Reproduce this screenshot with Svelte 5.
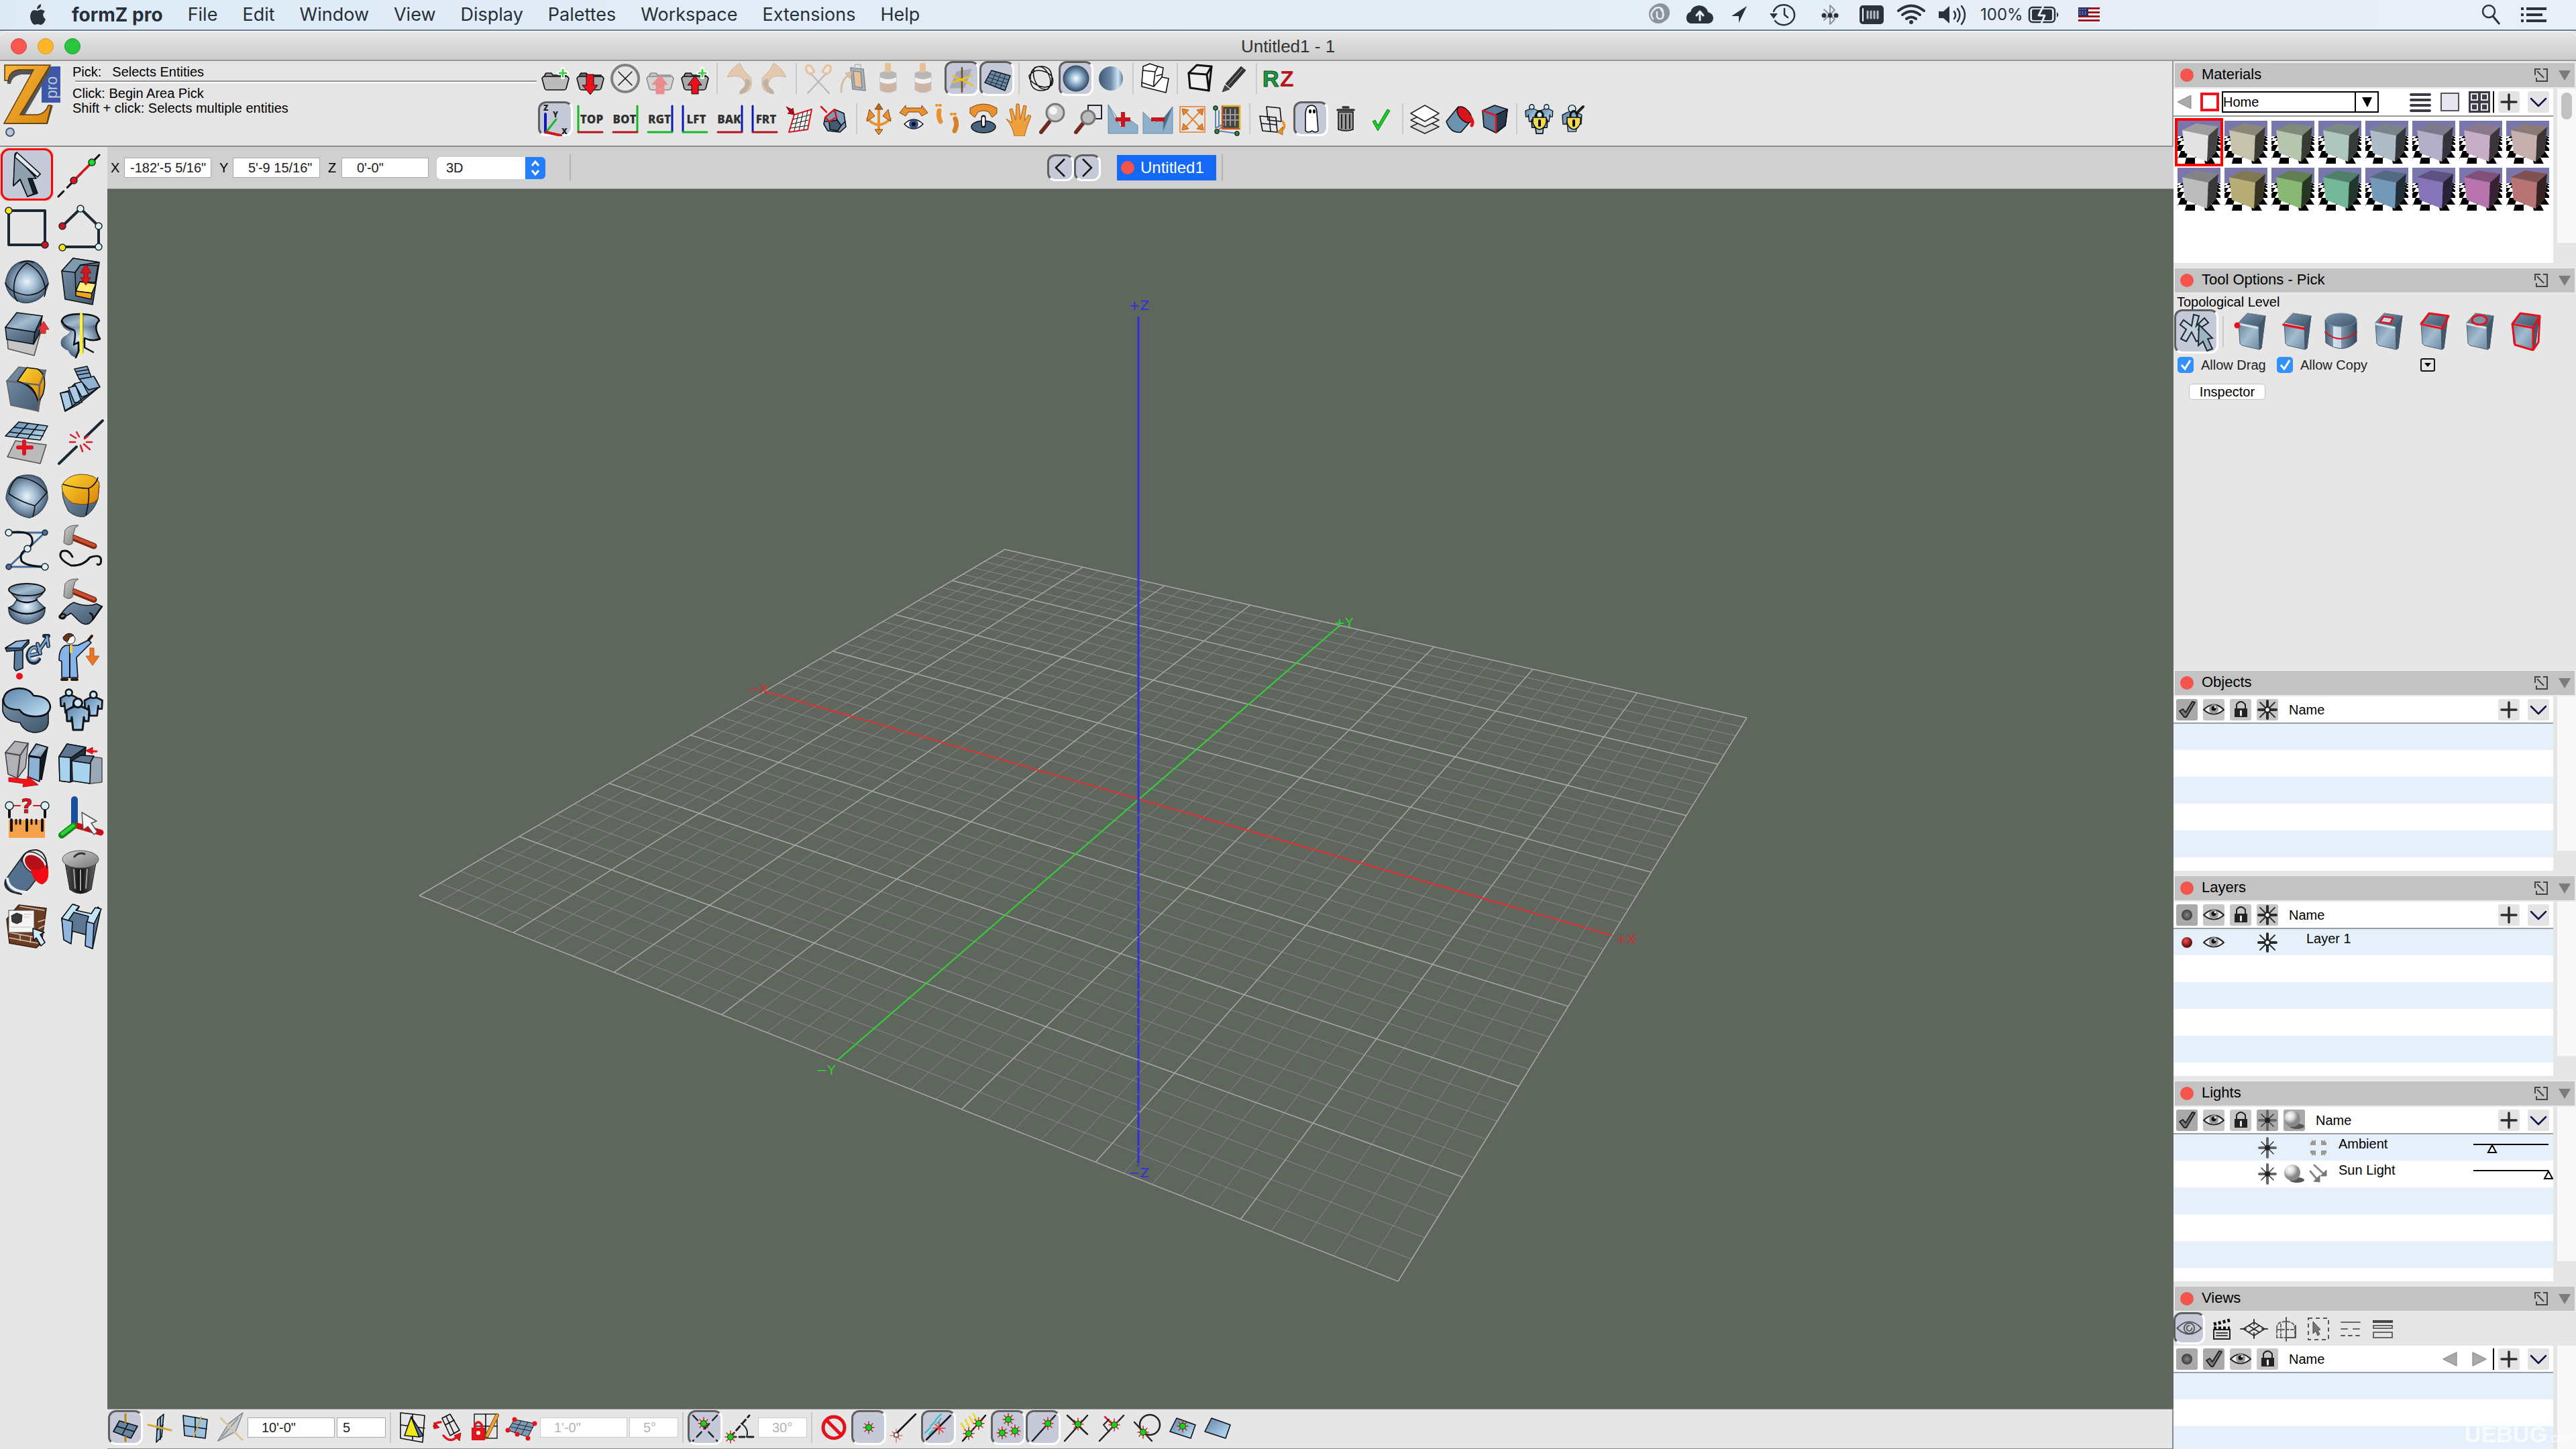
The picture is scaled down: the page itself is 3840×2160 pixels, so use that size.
<script lang="ts">
  const menus = ['File', 'Edit', 'Window', 'View', 'Display', 'Palettes', 'Workspace', 'Extensions', 'Help']

  let x = `-182'-5 5/16"`,
    y = `5'-9 15/16"`,
    z = `0'-0"`,
    space = '3D'
  let gridSize = `10'-0"`,
    gridDiv = '5',
    snapSize = `1'-0"`,
    snapAngle = '5°',
    angle = '30°'
  let allowDrag = true,
    allowCopy = true

  // --- icon helpers -------------------------------------------------------
  const dot = (cx: number, cy: number, fill: string, r = 5) =>
    `<circle cx="${cx}" cy="${cy}" r="${r}" fill="${fill}" stroke="#1c242c" stroke-width="1.5"/>`
  const poly = (pts: string, fill: string, stroke = '#0c1015', w = 1.6) =>
    `<polygon points="${pts}" fill="${fill}" stroke="${stroke}" stroke-width="${w}" stroke-linejoin="round"/>`
  const line = (d: string, stroke = '#0c1015', w = 1.6, extra = '') =>
    `<path d="${d}" fill="none" stroke="${stroke}" stroke-width="${w}" stroke-linecap="round" stroke-linejoin="round" ${extra}/>`
  const shape = (d: string, fill: string, stroke = '#0c1015', w = 1.6) =>
    `<path d="${d}" fill="${fill}" stroke="${stroke}" stroke-width="${w}" stroke-linejoin="round"/>`
  const spark = (cx: number, cy: number) =>
    line(`M${cx - 8} ${cy}h16M${cx} ${cy - 9}v18M${cx - 6} ${cy - 6}l12 12M${cx + 6} ${cy - 6}l-12 12`, '#c8232b', 1.5) +
    `<circle cx="${cx}" cy="${cy}" r="4.5" fill="#1ed00f" stroke="#0c4010"/>`
  const hammer =
    line('M28 21L60 34', '#7c2710', 9) + line('M28 20L60 33', '#c8502e', 5) +
    shape('M15 29l2-19q6-8 20-7l-5 4-3 10-1 13q-6 5-13-1z', 'url(#grey)', '#555', 1)
  const person = (dx: number, dy: number, s = 1, w = 2.5) =>
    `<g transform="translate(${dx} ${dy}) scale(${s})">` +
    shape('M0 17Q8 12 13 11h8q5 1 13 6l-1 16h-6l-1-6-2 19H10L8 27l-1 6H1z', 'url(#sky)', '#10161c', w) +
    `<circle cx="17" cy="6" r="6.5" fill="#cfe8f8" stroke="#10161c" stroke-width="${w}"/></g>`
  const folder = (lid: string, body: string) =>
    shape('M10 32V21l2-3h8l2 3h20v11z', lid) + shape('M6 26l2-3h36l2 3-4 15q-1 2-3 2H13q-2 0-3-2z', body)
  const viewLabel = (t: string, side: 'l' | 'r', c1: string, c2: string) =>
    line(side == 'l' ? 'M8 7v38' : 'M44 7v38', c1, 3) + line('M8 46h36', c2, 3) +
    `<text x="${side == 'l' ? 28 : 25}" y="33" text-anchor="middle" font-family="Open Sans, sans-serif" font-weight="800" font-size="17" fill="#333">${t}</text>`
  const cube = (extra: string) =>
    shape('M10 16L23 2 50 6 49 12 44 54 41 56 15 50 12 47z', 'url(#steel)', '#4d6072', 1) +
    shape('M10 16L23 2 50 6 40 22z', 'url(#dark)', '#6c7f90', 1) +
    line('M11 18l29 6', '#d4e2ec', 3) +
    shape('M40 22L50 6 44 54 41 56z', '#43586b', '#43586b', 1) + extra
  const lock = (cx: number, cy: number) =>
    line(`M${cx - 5} ${cy}v-5q5-9 10 0v5`, '#111', 3) +
    shape(`M${cx - 10} ${cy}h20v8q-3 9-10 10-7-1-10-10z`, '#f4d94e') + line(`M${cx} ${cy + 5}v7`, '#000', 4)
  const green = '#16b824',
    red = '#b5151d',
    blue = '#0d18b8',
    gold = '#e8912e'
  const plane = '7,32 17,12 45,22 38,42'

  // --- tool palette, 80 x 80 cells ---------------------------------------
  const tools: [string, string][] = [
    ['Pick', poly('23,8 20,57 30,48 41,73 56,68 47,44 60,40', '#16202a') + poly('22,10 20,57 30,47 41,73 50,69 42,46 54,46', '#8fa0ae') + poly('25,7 60,39 56,44 22,14', '#dfeaf0')],
    ['Line', line('M7 73L73 6', '#111', 3, 'stroke-dasharray="11 8"') + line('M30 49L57 22', '#d81620', 3.5) + dot(30, 49, '#e80f1c', 5) + dot(57, 22, '#18e01c', 5)],
    ['Rectangle', line('M13 14H67V65H13z', '#1c2830', 4) + dot(13, 14, '#f2e417') + dot(67, 65, '#d0131e')],
    ['Polyline', line('M13 37L40 11 67 37V68H13', '#1c2830', 4) + dot(13, 37, '#d0131e') + dot(40, 11, '#d8f2f8') + dot(67, 37, '#d8f2f8') + dot(67, 68, '#d8f2f8') + dot(13, 69, '#f2e417')],
    ['Dome', shape('M8 42Q12 16 32 10Q40 7 50 10Q68 18 72 42Q68 64 48 70Q38 73 30 70Q12 62 8 42z', 'url(#ball)', '#3b4e60', 1.5) + line('M8 42Q14 56 40 60Q60 60 72 43M40 12Q18 28 21 57Q22 64 26 69M40 12Q64 24 68 52Q68 58 66 62M30 12Q40 7 50 11')],
    ['Push Pull', poly('12,24 29,5 68,11 58,74 17,66', 'url(#dark)') + poly('12,24 29,5 68,11 40,15 32,26', '#7f9bb4') + poly('32,26 40,15 66,16 62,41 39,40 33,54', '#5e7388') + poly('39,40 63,43 57,57 33,54', '#ffee7a') + poly('33,54 57,57 56,66 33,61', '#f5a31a') + poly('48,14 56,27 51,27 51,34 55,34 48,45 40,34 45,34 45,27 40,27', '#d8161f', '#8c0b10', 1)],
    ['Extrude', poly('11,46 50,52 61,34 57,48 51,70 12,60', '#c5c5c5', '#555') + poly('8,28 52,35 50,53 10,46', 'url(#dark)') + poly('52,35 63,11 58,38 50,53', '#33475a') + poly('25,6 63,11 52,35 8,28', 'url(#steel)') + poly('65,19 73,31 68,31 68,37 61,37 61,31 57,31', '#e2343b', '#b02028', 1)],
    ['Revolve', shape('M11 18Q12 30 26 34L20 40Q8 44 12 56 18 62 22 62 24 70 34 73L46 44Q60 50 70 46 58 30 68 18z', 'url(#ball)', '#4d6274', 1) + `<ellipse cx="40" cy="18" rx="28" ry="10" fill="url(#steel)" stroke="none"/>` + line('M30 32Q34 34 30 54L37 50V64L33 73M12 20Q12 8 40 8 66 9 68 18 58 26 69 45 58 50 46 44V58L59 65M12 18Q16 28 30 32', '#0c1015', 2.5) + line('M41 8V68', '#fff03a', 4) + line('M44 9V66', '#8a7a10', 1)],
    ['Round', poly('10,28 28,7 68,12 57,73 16,64', 'url(#dark)', '#666') + shape('M26 28L40 8 56 10Q72 20 64 48L57 60Q54 42 42 34z', 'url(#sun)') + line('M10 28L59 34 68 12M59 34L57 73', '#666', 2.5) + line('M26 28Q50 36 56 56')],
    ['Stairs', poly('10,46 24,42 29,34 42,30 50,24 62,24 68,37 38,62 17,73', '#6f8fae') + poly('10,46 22,44 28,66 17,72', '#a9cbe8') + poly('22,38 33,35 42,60 31,60', '#a9cbe8') + poly('31,32 42,29 52,48 42,52', '#a9cbe8') + poly('38,25 60,21 69,37 52,41', '#8fb2d2') + poly('31,10 50,6 56,22 38,25', '#7fa3c4') + line('M33 14l19-3M35 19l18-3M17 73L66 38')],
    ['Mesh', poly('11,61 23,37 69,43 60,71', '#bbb', '#555') + poly('8,30 28,9 71,15 60,36', 'url(#sky)') + line('M21 17l46 5M14 24l50 6M42 11L24 32M57 13L41 34') + line('M36 38v18M27 47h20', '#e0141f', 6)],
    ['Break', line('M8 71L34 46M47 32L73 7', '#1c2830', 4) + line('M34 24l4 7M25 28l8 5M24 39h8M40 44l3 9M45 42l9 8M49 39h8M46 34l5-4', '#d8202a', 2.5)],
    ['Subdivision', shape('M9 44Q10 22 26 11 44 4 60 13 72 24 71 44 64 66 44 72 20 68 9 44z', 'url(#ball)', '#3b4e60', 1.5) + line('M13 36Q16 20 26 12Q52 12 70 34M13 36Q30 48 52 54Q60 46 70 34M52 54Q51 64 49 70')],
    ['NURBS', shape('M14 26Q10 40 22 62 34 72 46 70 60 62 66 44L68 24z', 'url(#dark)', '#222', 1) + shape('M12 24Q20 8 40 7 64 7 68 20L66 44Q56 56 28 50 12 40 12 24z', 'url(#sun)', '#704408', 1) + line('M14 22Q34 28 52 28 62 24 66 12M52 28Q54 44 48 68')],
    ['Spline', line('M67 14L13 65M13 14H67M13 65H67', '#4a6d98', 3) + line('M13 14Q46 10 48 24 50 32 41 38 28 44 32 56 38 64 67 65', '#0c1015', 3) + dot(13, 14, '#d8f2f8') + dot(67, 14, '#4a6d98', 4) + dot(41, 38, '#d8f2f8') + dot(13, 65, '#4a6d98', 4) + dot(67, 65, '#d8f2f8')],
    ['Reshape Curve', hammer + line('M28 50Q22 38 12 42 4 52 26 63 44 64 54 51 74 44 70 60q-3 3-5 1', '#111', 3)],
    ['Loft', shape('M13 18Q20 30 26 33L20 42 13 46Q12 58 22 64 40 76 58 64 68 58 67 46L56 36 54 32Q64 28 67 18z', 'url(#ball)', '#26333f', 1.5) + `<ellipse cx="40" cy="19" rx="27" ry="9" fill="url(#steel)" stroke="#111" stroke-width="2"/>` + line('M25 34Q40 42 55 34M13 46Q40 64 67 46', '#111', 2.5)],
    ['Deform Sheet', hammer + shape('M9 58Q20 42 30 38 50 46 64 40L72 44 58 64Q50 76 38 66L26 54 12 62z', 'url(#dark)') + line('M9 58q6-6 9 0-2 5-6 4-5-1-3-4M58 64q2-8-4-10M72 44l-14 20', '#111', 2.5)],
    ['Text', poly('22,28 34,28 34,56 24,60 21,56', '#5b7d9f') + poly('8,26 24,17 43,14 43,19 33,29 10,31', '#41607e') + poly('8,26 24,16 43,14 32,26', '#8fb6dc') + line('M58 32q-4-12-13-4-7 10 0 18 8 5 13-3M43 38l15-4', '#1c2c3c', 6) + line('M57 30q-4-9-11-2-6 9 0 16 7 3 11-3M45 37l12-3', '#7ea5cb', 3) + line('M56 20l4 14M70 9l2 14M58 30L70 12M66 8h6', '#1c2c3c', 6) + line('M56 20l4 14M70 9l2 14M58 30L70 12', '#7ea5cb', 3) + `<circle cx="29" cy="68" r="5" fill="#f01018"/>`],
    ['Place Symbol', poly('54,26 60,26 60,38 68,38 58,52 48,38 54,38', '#e8762a', '#c05a18', 1) + shape('M8 44Q8 26 18 22h18L52 14l4 4L38 36l-4 4 2 30H12V46z', '#86b4e8') + line('M24 42V70M24 22v20', '#111', 2) + `<circle cx="25" cy="13" r="7" fill="#fff" stroke="#111"/>` + shape('M14 10q8-10 16-3l-6 3-3 6q-7 0-7-6z', '#6b3517', '#111', 1) + line('M26 23v9', '#f0d040', 4) + line('M52 14l5-6M12 73h8M27 73h8', '#2b1a10', 4)],
    ['Boolean', shape('M4 22v18q4 16 26 17 4 12 20 15 20 0 22-14V34z', 'url(#dark)') + shape('M5 24Q6 8 28 6q16 0 22 11 24 1 25 17-2 14-22 14-18 0-24-10Q6 38 5 24z', 'url(#sky)', '#0c1015', 2.5)],
    ['Group', person(10, 8, 0.75, 3.5) + person(46, 11, 0.78, 3.5) + person(19, 22, 1, 3)],
    ['Move', poly('8,22 22,5 42,8 38,44 26,60 12,54', '#b3b0b8', '#444') + line('M8 22l22 4 12-18M30 26l-4 32', '#444', 2) + poly('43,26 54,9 71,14 62,62 44,58', '#131b22') + poly('43,28 60,30 59,65 42,58', '#8db2d4') + poly('43,26 54,9 71,14 61,29', 'url(#steel)') + poly('13,59 40,62 41,57 57,70 34,73 35,68 13,65', '#ee141c', '#c00d14', 1)],
    ['Stretch', poly('8,28 20,9 48,14 44,60 24,66 9,64', '#22303d') + poly('8,28 25,29 25,66 9,64', '#a8d2ee') + poly('8,28 20,9 48,14 27,29', '#5e7690') + poly('27,34 40,26 72,30 72,66 55,68 28,64', '#9aa9b5', '#555') + poly('27,34 55,38 54,68 28,64', '#a8d2ee') + poly('27,34 40,26 60,27 54,38', '#5e7690') + line('M64 20H52', '#ee141c', 3) + poly('48,19 58,14 58,24', '#ee141c', '#c00d14', 1)],
    ['Measure', `<rect x="13" y="42" width="54" height="27" fill="#f5a04a"/>` + line('M17 42v16M40 42v16M63 42v16', '#111', 4) + line('M24 42v6M30 42v6M47 42v6M54 42v6', '#111', 3) + line('M14 24v14M67 24v14', '#111', 4) + line('M18 21h12M50 21h12', '#d8161f', 2) + dot(14, 21, '#d8f2f8', 6) + dot(67, 21, '#d8f2f8', 6) + `<text x="40" y="32" text-anchor="middle" font-family="DejaVu Sans, sans-serif" font-weight="bold" font-size="30" fill="#e0141f" stroke="#500" stroke-width="0.6">?</text>`],
    ['Reference Plane', line('M31 12V48', '#174f9c', 10) + line('M32 50L70 61', '#cc0c12', 9) + line('M30 51L12 65', '#128a1a', 10) + line('M29 51L13 63', '#2fd03c', 5) + poly('42,31 64,44 56,47 65,60 60,64 51,52 44,57', '#f4f4f4', '#555', 1.5)],
    ['Paint', shape('M8 52L34 16Q50 30 56 48L44 64Q34 74 18 70 4 64 8 52z', '#53708f', '#222', 1.5) + line('M11 50q2 18 28 20', '#e8eef2', 4) + line('M8 52q0 18 24 21', '#222', 2) + `<ellipse cx="52" cy="27" rx="21" ry="14" transform="rotate(38 52 27)" fill="#e8ecee" stroke="#222" stroke-width="1.5"/><ellipse cx="52" cy="28" rx="17" ry="11" transform="rotate(38 52 28)" fill="#b8101a"/>` + shape('M46 36q14 6 24-8 6 26-8 30-12-4-16-22z', '#f20b14', '#f20b14', 1) + line('M32 24Q36 6 54 7 70 10 70 34', '#222', 2)],
    ['Delete', shape('M17 26L24 66Q40 78 56 66L63 26z', 'url(#bin)', '#222', 1) + line('M30 36l2 28M40 37v30M50 36l-2 28', '#a5a5a5', 2) + `<ellipse cx="40" cy="21" rx="27" ry="13" fill="url(#grey)" stroke="#555"/>` + line('M31 17q7-7 15-4', '#333', 3)],
    ['Materials', poly('10,30 28,9 69,14 62,66 54,73 14,66', '#6b3b22', '#3b1f12') + line('M13 50l44 8M14 58l42 8M30 53v9M46 56l-1 9M57 34l10-3M58 44l8-4M58 52l6-3M30 11l36 6', '#d8c4b4', 1.5) + `<rect x="13" y="17" width="38" height="33" fill="#f4f4f4" stroke="#444"/>` + poly('17,25 25,21 33,24 32,34 25,37 18,34', '#383838', '#222', 1) + line('M36 23h10M36 27h8M16 42h30', '#c8b8b8', 1) + poly('49,44 66,50 60,53 67,65 61,70 54,58 50,62', '#cfeaf8')],
    ['Beam', poly('12,29 30,8 38,12 34,18 58,24 66,12 70,16 58,74 48,70 50,54 28,48 26,64 16,60', '#5d7792') + poly('12,29 28,34 26,67 15,61', '#8fb6de') + poly('49,34 60,36 58,74 47,70', '#8fb6de') + poly('12,29 28,8 38,11 33,17 56,22 62,13 71,15 60,37 50,34 52,26 30,20 22,32', '#c4e4f6')],
  ]

  // --- upper tool bars, 52 x 52 cells --------------------------------------
  type Tool = { name: string; art?: string; on?: boolean; dim?: boolean; gap?: 'line' | 'space' }
  const sep: Tool = { name: '', gap: 'line' }
  const space6: Tool = { name: '', gap: 'space' }
  const undo = shape('M8 24Q14 10 27 3 31 14 43 24 46 34 42 42 36 48 27 49 26 44 30 42 37 38 35 33L31 26Q26 20 8 24z', '#dfa061', '#a07850', 1) + shape('M35 27q8 0 7 8-4 12-15 14 0-6 4-8 6-4 4-14z', '#8a6840', '#8a6840', 1)
  const scissors = line('M14 18L42 48M38 18L10 48', '#777', 2) + line('M8 8q6-6 12 8l-6 4q-8-4-6-12M44 8q-6-6-12 8l6 4q8-4 6-12', gold, 3)
  const bottle = shape('M14 18q12-6 24 0v25q-12 8-24 0z', '#b0764a', '#888', 1) + `<path d="M14 24q12 6 24 0v7q-12 6-24 0z" fill="#fff"/><path d="M14 18q12-6 24 0v6q-12 6-24 0z" fill="#777"/><rect x="21" y="3" width="9" height="14" fill="${gold}"/>`
  const row1: Tool[] = [
    { name: 'New', art: folder('#999', '#bbb') + line('M37 12v12M31 18h12', '#fff', 6) + line('M37 13v10M32 18h10', '#3fd048', 3) },
    { name: 'Open', art: folder('#666', '#aaa') + poly('20,20 31,20 31,36 37,36 26,50 14,36 20,36', '#ee1018', '#0c1015', 1) },
    { name: 'Close', art: `<circle cx="26" cy="26" r="20" fill="none" stroke="#808080" stroke-width="4"/>` + line('M16 16L36 36M36 16L16 36', '#111', 1.5) },
    { name: 'Save', dim: true, art: folder('#999', '#bbb') + poly('20,49 32,49 32,35 37,35 26,21 14,35 20,35', '#ee1018', '#ee1018', 1) },
    { name: 'Save As', art: folder('#888', '#aaa') + poly('21,49 31,49 31,36 36,36 26,22 15,36 21,36', '#ee1018', '#0c1015', 1) + line('M37 12v12M31 18h12', '#fff', 6) + line('M37 13v10M32 18h10', '#3fd048', 3) },
    sep,
    { name: 'Undo', dim: true, art: undo },
    { name: 'Redo', dim: true, art: `<g transform="translate(52 0) scale(-1 1)">${undo}</g>` },
    sep,
    { name: 'Cut', dim: true, art: scissors },
    { name: 'Copy', dim: true, art: poly('22,10 41,12 44,44 25,42', '#4d6b8c') + poly('26,15 37,16 39,40 28,38', gold) + line('M28 10q0-8 5-4 5-4 4 4', '#888', 2) + line('M8 46Q8 28 18 22', '#b58a4a', 3) + poly('14,18 24,16 21,26', gold, '#a87030', 1) },
    { name: 'Paste', dim: true, art: bottle },
    { name: 'Paste Special', dim: true, art: bottle },
    space6,
    { name: 'Show Axes', on: true, art: poly('18,16 40,12 30,40 8,40', '#a4a9b8', '#a4a9b8', 1) + line('M26 10v36', '#6b5320', 2.5) + line('M12 22l30 14M12 32l28-10', '#f0c020', 2.5) },
    { name: 'Show Grid', on: true, art: poly('18,14 46,22 38,44 8,32', '#6a87a4', '#0c1015', 1.5) + line('M15 19l28 9M12 24l28 9M10 29l28 9M25 16l-9 20M32 18l-9 21M39 20l-8 21', '#1a2530', 1) },
    sep,
    { name: 'Wireframe', art: line('M26 8q16 0 16 18T26 44 10 26 26 8M8 22q8-12 24-6t10 20q-10 6-22 0T8 22M16 10q12-6 20 8t0 24q-12 2-18-10T16 10', '#111', 1.5) },
    { name: 'Shaded', on: true, art: `<circle cx="26" cy="26" r="19" fill="url(#glow)" stroke="#2c4054"/>` },
    { name: 'Rendered', art: `<circle cx="26" cy="26" r="18" fill="url(#side)"/>` },
    sep,
    { name: 'Hidden Line', art: poly('6,34 8,8 18,4 30,8 38,10 36,24 46,26 42,47 6,38', '#fff', '#111', 1.6) + line('M8 14l18 2 4-8M26 16l-2 16M6 32l18 6 12-14M24 38v-8M28 22l8-2') },
    sep,
    { name: 'Sketch', art: poly('10,18 22,6 44,8 40,44 12,40', '#eee', '#111', 3) + line('M10 18l27 2 7-12M37 20l3 24', '#111', 3) },
    { name: 'Doodle', art: poly('36,8 43,14 20,40 13,34', '#333', '#333', 1) + poly('12,36 19,42 8,46', '#444', '#444', 1) + line('M17 36L38 12', '#ccc', 1) },
    sep,
    { name: 'RenderZone', art: `<g font-family="Liberation Sans, sans-serif" font-weight="bold" font-size="34"><text x="2" y="38" fill="#1c9a44" stroke="#0a4a20">R</text><text x="28" y="38" fill="#b5141c">Z</text></g>` },
  ]
  const lens = (s: string) => line('M8 46L20 31', '#6e2a1e', 6) + s
  const row2: Tool[] = [
    { name: 'Axonometric', on: true, art: line('M11 19v27', blue, 4) + line('M12 46L27 27', green, 3) + line('M12 46l22 5', '#d0141c', 4) + `<g font-family="Open Sans, sans-serif" font-weight="800" font-size="12" fill="#222"><text x="8" y="14">Z</text><text x="22" y="24">Y</text><text x="35" y="49">X</text></g>` },
    { name: 'Top', art: viewLabel('TOP', 'l', green, red) },
    { name: 'Bottom', art: viewLabel('BOT', 'r', green, red) },
    { name: 'Right', art: viewLabel('RGT', 'r', blue, green) },
    { name: 'Left', art: viewLabel('LFT', 'l', blue, green) },
    { name: 'Back', art: viewLabel('BAK', 'r', blue, red) },
    { name: 'Front', art: viewLabel('FRT', 'l', blue, red) },
    { name: 'View to Plane', art: poly('10,46 18,20 44,12 38,42', '#f4f4f4', '#e0141f', 2) + line('M24 19l-6 25M31 17l-6 26M38 14l-6 29M16 27l26-7M14 34l25-6M12 40l27-4', '#111', 1) + poly('6,8 14,12 16,10 18,20 8,18 11,16', '#a01018', '#a01018', 1) },
    { name: 'View to Face', art: poly('12,24 26,12 40,18 43,38 34,46 16,44 10,34', '#7f9db8') + poly('18,30 30,28 36,36 31,44 19,42', '#455a6e') + line('M26 14l4 14M36 36l6-6M12 30l6 0') + line('M12 24l14-12 3 12-11 6zM6 8l8 8', '#d81620', 2.5) },
    sep,
    { name: 'Orbit', art: line('M26 8v38M9 26q17 18 34 0', gold, 4) + poly('26,3 32,12 20,12', '#b06a1c', '#7a4410', 1) + poly('26,50 32,42 20,42', gold, '#7a4410', 1) + poly('12,12 20,22 8,30', gold, '#7a4410', 1) + poly('40,12 32,22 44,30', gold, '#7a4410', 1) },
    { name: 'Look', art: poly('5,17 14,6 14,10 38,10 38,6 47,17 38,22 34,16 18,16 14,22', gold, '#7a4410', 1) + shape('M12 34q14-14 28 0-14 14-28 0z', '#fff') + `<circle cx="26" cy="34" r="7" fill="#3a4f88"/><circle cx="26" cy="34" r="3" fill="#111"/>` },
    { name: 'Walk', art: line('M12 14q-2 8 2 16', gold, 7) + line('M36 26q4 8-1 18', '#d87f28', 7) + line('M8 6h10M30 19h10', gold, 4, 'stroke-dasharray="1 4"') },
    { name: 'Spin', art: shape('M6 10Q26-2 46 10l0 8-7 6-5-8q-8-4-16 0l-5 8-7-6z', gold, '#7a4410', 1) + `<ellipse cx="26" cy="38" rx="18" ry="9" fill="#4a6480" stroke="#111" stroke-width="1.500"/>` + line('M26 24v12', '#111', 7) + line('M26 25v10', '#fff', 4) },
    { name: 'Pan', art: shape('M8 26l9 6-4-20 4-1 5 17 1-24h4l2 23 5-21 4 1-3 22 6-9 4 2-6 16-4 14H20q-2-14-12-26z', '#f0a03a', '#a8641a', 1) },
    { name: 'Zoom', art: lens(`<circle cx="29" cy="17" r="13" fill="#ccc" stroke="#777" stroke-width="3"/><circle cx="26" cy="14" r="6" fill="#f4f4f4"/>`) },
    { name: 'Zoom Area', art: `<rect x="26" y="6" width="20" height="20" fill="none" stroke="#223" stroke-width="2"/>` + lens(`<circle cx="26" cy="24" r="10" fill="#bbb" stroke="#777" stroke-width="3"/>`) },
    { name: 'Zoom In', art: poly('4,48 4,5 22,38 34,26 48,36 48,48', '#8fb0c8', '#6a8ca8', 1) + poly('4,5 24,34 16,30', '#c4dcec', '#6a8ca8', 1) + line('M26 16v22M15 27h22', '#c8161e', 6, 'style="stroke-linecap:butt"') },
    { name: 'Zoom Out', art: poly('4,48 4,16 20,32 34,26 48,8 48,48', '#8fb0c8', '#6a8ca8', 1) + poly('48,8 34,44 34,26', '#4a6a86', '#6a8ca8', 1) + line('M16 27h20', '#c8161e', 6, 'style="stroke-linecap:butt"') },
    { name: 'Fit All', art: `<rect x="7" y="8" width="37" height="38" fill="none" stroke="#e8955a" stroke-width="2"/>` + line('M14 14l24 26M38 14L14 40', '#e8842e', 2) + poly('10,11 20,13 12,21', '#e8842e', '#b5601c', 1) + poly('42,11 32,13 40,21', '#e8842e', '#b5601c', 1) + poly('10,43 20,41 12,33', '#e8842e', '#b5601c', 1) + poly('42,43 32,41 40,33', '#e8842e', '#b5601c', 1) },
    { name: 'Match View', art: `<rect x="18" y="7" width="26" height="34" fill="#444" stroke="#e0b020" stroke-width="2.500"/>` + line('M23 12v24M30 12v24M37 12v24M20 20h22M20 28h22', '#999', 2) + line('M8 10v30M13 14v24M12 44l28 4M8 40l12-6', '#5d86b0', 2) + line('M10 44l8-6M18 7v34h26', '#d8302a', 1.5) + dot(8, 10, '#28a020', 3) + dot(10, 45, '#28a020', 3) + dot(40, 48, '#28a020', 3) },
    sep,
    { name: 'Frames', art: poly('18,8 38,10 40,30 20,28', 'none') + poly('8,22 32,24 34,46 12,44', 'none') + line('M22 23l2 22M10 33l23 2') + line('M42 30q6 8-2 14', gold, 3.5) + poly('34,46 42,38 42,50', gold, '#a86a18', 1) },
    space6,
    { name: 'Ghost', on: true, art: shape('M18 44V18Q19 6 27 6q8 0 8 12l2 26q-4 4-9 0-6 4-10 0z', '#fff') + `<ellipse cx="25" cy="15" rx="2" ry="3"/><ellipse cx="31" cy="15" rx="2" ry="3"/>` },
    { name: 'Trash', art: shape('M15 16h22v26q-11 4-22 0z', '#999') + line('M20 20v20M26 20v21M32 20v20', '#222', 2) + line('M14 13h24M22 9h8', '#333', 3.5) },
    { name: 'Accept', art: poly('14,30 18,28 22,36 36,12 40,14 22,44', '#14d024', '#0a7a14', 1) },
    sep,
    { name: 'Layers', art: poly('26,28 47,38 26,48 5,38', '#ddd', '#222', 1.5) + poly('26,18 47,28 26,38 5,28', '#eee', '#222', 1.5) + poly('26,6 47,18 26,30 5,18', '#fff', '#222', 1.5) },
    { name: 'Paint Bucket', art: shape('M6 30L24 8Q36 18 40 32L28 46Q12 48 6 30z', '#6c93b0') + `<ellipse cx="33" cy="20" rx="14" ry="8" transform="rotate(50 33 20)" fill="#d8141c" stroke="#111" stroke-width="1.500"/>` + line('M42 24q5 6 2 12', '#e4141c', 5) },
    { name: 'Attributes', art: poly('8,14 26,6 45,12 42,36 28,47 10,38', '#5c7c9c') + poly('28,20 45,12 42,36 28,47', '#26384a') + line('M8 14l20 7v26', '#e4141c', 2.5) },
    sep,
    { name: 'Lock Objects', art: person(6, 5, 0.55) + person(28, 5, 0.55) + person(15, 16, 0.7) + lock(27, 24) },
    { name: 'Lock Layers', art: person(9, 6, 0.85, 1.6) + line('M30 18l10-10', '#222', 4) + lock(26, 24) },
  ]

  // --- bottom snap bar -------------------------------------------------------
  const gridTools: Tool[] = [
    { name: 'XY Plane', on: true, art: poly('17,16 44,24 34,42 8,32', '#68859f') + line('M30 20l-9 17M13 24l26 8') + line('M26 6v12M26 40v6', '#b88818', 3) },
    { name: 'YZ Plane', art: poly('22,14 31,6 28,40 20,48', '#9cc2e0') + line('M26 10v34M21 30l9-8') + line('M8 22l34 8', '#d8a838', 3) },
    { name: 'ZX Plane', art: poly('8,8 44,14 41,42 10,38', '#9cc2e0') + line('M26 11v29M9 23l34 5') + line('M35 10L24 40', '#d8a838', 2) },
    { name: 'Custom Plane', dim: true, art: poly('8,46 24,20 45,4 34,32', '#9aacbc') + line('M14 40L38 12') + line('M12 12l32 32', '#c89838', 3) },
  ]
  const planeTools: Tool[] = [
    { name: 'Perspective Plane', art: poly('8,4 44,8 41,48 8,42', '#e6e6e6') + line('M26 6v38M8 22l36 5') + poly('24,10 36,40 14,38', '#f0e818') + poly('24,10 42,38 36,40', '#5878a0') },
    { name: 'Rotate Plane', art: poly('16,12 28,6 42,30 28,38', 'none') + line('M22 9l12 26M21 22l13-7') + line('M4 24q2-6 10-6M18 38q10 12 20 2', '#e4141c', 3.5) + poly('4,18 4,28 12,26', '#e4141c', '#b01018', 1) + poly('34,38 44,34 42,46', '#e4141c', '#b01018', 1) },
    { name: 'Lock Plane', art: `<rect x="10" y="6" width="34" height="36" fill="#e6e6e6" stroke="#222" stroke-width="1.500"/>` + line('M27 6v36M10 24h34') + line('M11 26v-4q5-8 10 0v4', '#d8141c', 3.5) + `<rect x="6" y="26" width="20" height="19" fill="#e4141c"/><circle cx="16" cy="34" r="3" fill="#fff"/>` + line('M44 8L28 40', '#7a4a10', 6) + line('M44 8L29 38', '#f0a030', 4) },
    { name: 'Grid Snap', art: poly('16,14 46,20 36,40 6,30', '#7d9ab4', '#0c1015', 1) + line('M26 16L16 34M36 18L26 37M13 20l30 6M10 25l30 6', '#1a2530', 1) + [[16, 14], [46, 20], [36, 42], [6, 30], [20, 36]].map((p) => `<circle cx="${p[0]}" cy="${p[1]}" r="3.5" fill="#ee1018"/>`).join('') },
  ]
  const angleTools: Tool[] = [
    { name: 'Ortho Snap', on: true, art: line('M8 8l36 38M44 8L8 46', '#1c2428', 2.5, 'stroke-dasharray="10 7"') + spark(24, 20) },
    { name: 'Angle Snap', art: line('M12 40H46M12 40L40 8', '#1c2428', 3, 'stroke-dasharray="8 5"') + line('M28 20q12 8 8 20', '#1c2428', 2) + spark(12, 40) },
  ]
  const snaps: Tool[] = [
    { name: 'No Snap', art: `<circle cx="26" cy="26" r="16" fill="none" stroke="#e4101a" stroke-width="5"/>` + line('M15 15l22 22', '#e4101a', 5) },
    { name: 'Point', on: true, art: spark(26, 26) },
    { name: 'Endpoint', art: line('M44 6L16 34', '#111', 2.5) + line('M6 38h18M15 28v20M9 32l12 12', '#f07070', 1.5) + `<rect x="12" y="34" width="6" height="6" fill="#fff" stroke="#111"/>` },
    { name: 'Midpoint', on: true, art: line('M44 8L8 44', '#111', 2.5) + line('M6 34l8-8M14 24l8-8M22 14l8-8M12 36l6-6M24 20l6-8', '#30b8c8', 2) + line('M18 27h18M27 18v18M21 21l12 12', '#f03030', 1.5) },
    { name: 'Segment', art: line('M44 8L10 46', '#111', 2.5) + line('M8 20l6 10M14 14l6 12M20 10l6 10M26 6l5 9', '#e8d820', 2.5) + spark(34, 20) + spark(19, 35) },
    { name: 'Vertices', on: true, art: spark(26, 14) + spark(17, 34) + spark(36, 31) },
    { name: 'Line', on: true, art: line('M44 8L10 46', '#1c2428', 2.5) + spark(33, 20) },
    { name: 'Intersection', art: line('M10 8l30 28M40 8L6 46', '#1c2428', 2.5) + spark(26, 21) },
    { name: 'Perpendicular', art: line('M42 8L6 46', '#1c2428', 2.5) + line('M14 10l14 14', '#e4141c', 2.5) + line('M20 14l-8 8 8 10', '#1c2428', 2) + spark(28, 22) },
    { name: 'Tangent', art: `<circle cx="29" cy="22" r="15" fill="none" stroke="#1c2428" stroke-width="2.500"/>` + line('M6 18l26 28', '#1c2428', 2.5) + spark(19, 33) },
    { name: 'Face Point', art: poly(plane, 'url(#sky)') + spark(26, 24) },
    { name: 'Face', art: poly(plane, 'url(#sky)') },
  ]

  // --- small 32 x 32 palette icons --------------------------------------------
  const eye = shape('M1 16Q16 1 31 16 16 29 1 16z', '#eee', '#222', 2) + '<circle cx="16" cy="15" r="7" fill="#999"/><circle cx="16" cy="14" r="3.500" fill="#111"/><circle cx="18" cy="12" r="1.500" fill="#fff"/>'
  const rays = line('M16 3v26M3 16h26', '#2c2c2c', 4) + line('M5 5l7 7M27 5l-7 7M5 27l7-7M27 27l-7-7', '#333', 2)
  const small: Record<string, string> = {
    check: poly('5,18 10,15 14,20 24,4 28,5 15,27 12,27', '#777', '#222', 2),
    eye,
    lock: `<rect x="7" y="14" width="19" height="13" fill="#222"/>` + line('M10 14V8q6-8 13 0v6', '#222', 2) + line('M16.5 18v6', '#eee', 3),
    snap: rays + '<circle cx="16" cy="16" r="4" fill="#fff" stroke="#222" stroke-width="2.500"/>',
    light: line('M16 2v28M4 16h24', '#666', 4) + line('M7 7l18 18M25 7L7 25', '#333', 1.5) + '<circle cx="16" cy="16" r="4" fill="#222"/>',
    shadow: '<ellipse cx="20" cy="25" rx="11" ry="4" fill="#555"/><circle cx="13" cy="14" r="12" fill="url(#pearl)"/>',
    ball: '<circle cx="16" cy="16" r="8" fill="url(#greyball)"/>',
    active: '<circle cx="16" cy="16" r="8" fill="url(#redball)"/>',
    ambient: '<path d="M6 5l3 2 3-2v8H4v-4l2-1zM26 5l-3 2-3-2v8h8v-4l-2-1zM6 29l3-2 3 2v-8H4v4l2 1zM26 29l-3-2-3 2v-8h8v4l-2 1z" fill="#9a9a9a"/>',
    sun: line('M10 4l13 12M4 13l10 12', '#888', 3) + poly('28,11 28,20 19,20', '#777', '#777', 1) + poly('18,19 18,29 9,28', '#777', '#777', 1),
    plus: line('M16 5v22M5 16h22', '#2c2c2c', 3.5),
    more: line('M5 11l11 11L27 11', '#10104a', 2.5),
    list: line('M2 5h28M2 13h28M2 21h28M2 29h28', '#3d3b45', 4),
    single: '<rect x="3" y="3" width="26" height="26" fill="#e8e6ee" stroke="#55535c" stroke-width="2"/>',
    tiles: '<path d="M0 0h32v32H0z" fill="#3d3b45"/><path d="M3 3h11v11H3zM18 3h11v11H18zM3 18h11v11H3zM18 18h11v11H18z" fill="#e8e6ee"/><path d="M5 5h7v7H5zM20 5h7v7h-7zM5 20h7v7H5zM20 20h7v7h-7z" fill="#3d3b45"/>',
    left: poly('26,6 26,26 6,16', '#aaa', '#999', 1.5),
    right: poly('6,6 6,26 26,16', '#aaa', '#999', 1.5),
  }

  const pickLevels: [string, string][] = [
    ['Point', cube('<circle cx="8" cy="20" r="4.500" fill="#e8101a"/>')],
    ['Edge', cube(line('M9 19l31 6', '#e8101a', 3.5))],
    ['Outline', shape('M3 12Q16 0 46 8l4 6v30Q30 64 4 46z', 'url(#bands)', '#3d5266', 1) + `<ellipse cx="27" cy="12" rx="23" ry="10" fill="url(#dark)" stroke="#7a8ea0"/>` + line('M3 30q22 20 47 0', '#d8141c', 2)],
    ['Hole', cube(poly('22,7 36,9 32,17 17,15', '#c8dce8', '#e8101a', 2.5))],
    ['Face', cube(poly('10,18 22,2 51,6 42,25', 'none', '#e8101a', 3))],
    ['Opening', cube(`<ellipse cx="29" cy="12" rx="11" ry="7" fill="#7a92a8" stroke="#e8101a" stroke-width="3"/>`)],
    ['Object', cube(line('M10 18L22 2 51 6 41 24zM10 18l4 31 27 8V24M41 57l8-12 2-39', '#e8101a', 3))],
  ]

  const viewKinds: [string, string][] = [
    ['View', shape('M5 25Q24 5 43 25 24 43 5 25z', 'none', '#555', 2) + line('M24 17a8 8 0 1 0 8 8 8 8 0 0 0-8-8M24 21a4 4 0 1 0 4 4', '#555', 2)],
    ['Animation', `<path d="M12 26h24v14H12z" fill="#ddd" stroke="#222" stroke-width="2"/>` + line('M12 18L36 12M12 24h24', '#111', 5, 'stroke-dasharray="4 3" style="stroke-linecap:butt"') + line('M16 31h16M16 35h16', '#444', 2)],
    ['Plane', poly('8,25 24,15 40,25 24,35', 'none', '#333', 2) + line('M4 25h8M36 25h8M24 11v8M24 31v8M16 20l16 10M32 20L16 30', '#333', 2)],
    ['Section', line('M10 38V24q0-10 13-10t14 10v14zM10 26h28M16 18v20', '#666', 2, 'stroke-dasharray="4 3"') + line('M24 8v35M38 20v18H24', '#555', 2)],
    ['Selection', `<rect x="9" y="9" width="30" height="32" fill="none" stroke="#555" stroke-width="2" stroke-dasharray="6 5"/>` + poly('16,14 16,32 20,28 23,35 26,33 23,27 27,26', '#777', '#444', 1)],
    ['Line Styles', line('M10 15h28', '#666', 2) + line('M10 25h28', '#666', 2, 'stroke-dasharray="9 9"') + line('M10 35h28', '#555', 2, 'stroke-dasharray="5 6"')],
    ['Layers', `<path d="M9 12h30v4H9z" fill="#444"/><path d="M10 20h28v4H10zM10 30h28v8H10z" fill="#e6e6e6" stroke="#666" stroke-width="2"/>`],
  ]

  // --- menu bar extras; each is drawn in its own slot -----------------------------
  const ink = '#2a333c'
  const extras: [number, string][] = [
    [61, `<circle cx="30" cy="21" r="14" fill="#8c949b"/><circle cx="33" cy="19" r="14" fill="#8c949b"/>` + line('M22 28q-5-6 0-12l4-4q10-3 11 6v6M28 18v7q2 5 8 2 4-6-2-13', '#e6edf6', 2.5)],
    [64, `<path d="M17 35q-7-2-6-10 1-6 6-7 2-9 13-10 11 1 13 10 7 2 8 8 0 8-7 9z" fill="${ink}"/>` + line('M31 30V19M26 23l5-6 5 6', '#e8eff6', 3)],
    [55, `<path d="M37 9L14 24h11v10z" fill="${ink}"/>`],
    [75, line('M22 17a16 15 0 1 1 2 14', ink, 2.5) + `<path d="M16 20h12l-6 8z" fill="${ink}"/>` + line('M38 13v9l5 4', ink, 2.5)],
    [59, line('M22 14l16 15-7 7V8l7 7-16 15', '#8c949b', 2) + `<circle cx="22" cy="23" r="3.500" fill="${ink}"/><circle cx="31" cy="23" r="3.500" fill="${ink}"/><circle cx="40" cy="23" r="3.500" fill="${ink}"/>`],
    [62, `<rect x="16" y="8" width="36" height="28" rx="5" fill="${ink}"/>` + line('M21 13v18', '#fff', 2) + line('M28 17v10M33 17v10M38 17v10M43 17v10', '#b6bdc4', 3)],
    [62, line('M12 16q19-15 38 0M18 22q13-10 26 0M24 28q7-5 14 0', ink, 4) + `<circle cx="31" cy="33" r="3" fill="${ink}"/>`],
    [62, `<path d="M10 17h7l9-8v26l-9-8h-7z" fill="${ink}"/>` + line('M33 17q4 6 0 11M38 13q7 9 0 19M44 9q10 13 0 27', ink, 2.5)],
  ]
  const battery = `<rect x="8" y="11" width="38" height="22" rx="5" fill="none" stroke="${ink}" stroke-width="2.500"/><rect x="12" y="14" width="30" height="16" rx="2" fill="${ink}"/><path d="M49 18q5 4 0 8z" fill="${ink}"/>` + line('M29 9l-7 14h9l-5 12', '#e8eff6', 3)
  const flag = `<rect x="15" y="11" width="32" height="22" fill="#fff"/>` + [0, 1, 2, 3].map((i) => `<rect x="15" y="${11 + i * 6}" width="32" height="3" fill="#9c1420"/>`).join('') + `<rect x="15" y="11" width="15" height="13" fill="#2b2f68"/>` + line('M17 14h12M17 18h12M17 21h12', '#cfd3ea', 1, 'stroke-dasharray="1 3"')

  // --- materials ---------------------------------------------------------------
  const materials = [
    '#e2e2e2', '#c6c2ad', '#b6c6ae', '#aec6bc', '#adbcc6', '#b3aec8', '#c6aec6', '#c6b0ae',
    '#bcbcbc', '#b8ad76', '#88b874', '#74b899', '#7499b8', '#8574b8', '#b874ad', '#b87474',
  ]
  let picked = 0

  function checkerPath() {
    const rows = [23, 26, 30, 36, 45, 55, 68]
    const px = (k: number, h: number) => Math.round(26 + k * (h - 2) * 0.24)
    let d = ''
    for (let r = 0; r < rows.length - 1; r++)
      for (let k = -10; k < 10; k++)
        if ((k + r) % 2 == 0)
          d += `M${px(k, rows[r])} ${rows[r]}L${px(k + 1, rows[r])} ${rows[r]} ${px(k + 1, rows[r + 1])} ${rows[r + 1]} ${px(k, rows[r + 1])} ${rows[r + 1]}z`
    return d
  }
  const checker = checkerPath()

  // --- ground grid: unit square mapped onto the projected quad ---------------------
  const quad = [[625, 1335], [2084, 1910], [2604, 1070], [1498, 819]]
  function project(u: number, v: number) {
    const [[x0, y0], [x1, y1], [x2, y2], [x3, y3]] = quad
    const dx1 = x1 - x2, dx2 = x3 - x2, sx = x0 - x1 + x2 - x3
    const dy1 = y1 - y2, dy2 = y3 - y2, sy = y0 - y1 + y2 - y3
    const den = dx1 * dy2 - dx2 * dy1
    const g = (sx * dy2 - dx2 * sy) / den
    const h = (dx1 * sy - sx * dy1) / den
    const w = g * u + h * v + 1
    return [
      ((x1 - x0 + g * x1) * u + (x3 - x0 + h * x3) * v + x0) / w,
      ((y1 - y0 + g * y1) * u + (y3 - y0 + h * y3) * v + y0) / w,
    ].map((n) => n.toFixed(1)).join(' ')
  }
  function gridPath(major: boolean) {
    let d = ''
    for (let i = 0; i <= 40; i++) {
      if ((i % 5 == 0) != major) continue
      const t = i / 40
      d += `M${project(t, 0)}L${project(t, 1)}M${project(0, t)}L${project(1, t)}`
    }
    return d
  }
  const axisLabels: [string, number, number, string][] = [
    ['+Z', 1698, 462, '#2f2fe0'], ['−Z', 1698, 1755, '#2f2fe0'],
    ['+Y', 2003, 935, '#2fd02f'], ['−Y', 1231, 1602, '#2fd02f'],
    ['−X', 1130, 1034, '#d03030'], ['+X', 2424, 1407, '#d03030'],
  ]

  const lights = [
    { name: 'Ambient', shadow: false, icon: 'ambient', level: 25 },
    { name: 'Sun Light', shadow: true, icon: 'sun', level: 100 },
  ]
</script>

{#snippet toolbar(items: Tool[])}
  {#each items as t}
    {#if t.gap}
      <span class="gap {t.gap}"></span>
    {:else}
      <button class="tool" class:on={t.on} disabled={t.dim} title={t.name} aria-label={t.name}>
        <svg viewBox="0 0 52 52">{@html t.art}</svg>
      </button>
    {/if}
  {/each}
{/snippet}

{#snippet mini(icon: string, kind = '')}
  <button class="mini {kind}" aria-label={icon}><svg viewBox="0 0 32 32">{@html small[icon]}</svg></button>
{/snippet}

{#snippet head(title: string)}
  <header class="palette-head">
    <i class="dot"></i>
    <h2>{title}</h2>
    <svg class="pop" viewBox="0 0 20 20">
      <path d="M1 10V1h8M13 1h6v18H3v-5M4 4l10 10" fill="none" stroke="#444" stroke-width="2" />
    </svg>
    <svg class="fold" viewBox="0 0 20 20"><path d="M1 3h18l-9 15z" fill="#7b7b7b" /></svg>
  </header>
{/snippet}

<svg class="defs" aria-hidden="true">
  <defs>
    <linearGradient id="steel" x2="1" y2="1"><stop stop-color="#4f6a84" /><stop offset=".5" stop-color="#a3bccf" /><stop offset="1" stop-color="#5d7c98" /></linearGradient>
    <linearGradient id="dark" x2="1" y2="1"><stop stop-color="#7b95ad" /><stop offset="1" stop-color="#3e5468" /></linearGradient>
    <linearGradient id="sky" x2="1" y2="1"><stop stop-color="#5d83aa" /><stop offset="1" stop-color="#c4e4f8" /></linearGradient>
    <linearGradient id="side"><stop stop-color="#3f5770" /><stop offset=".5" stop-color="#6d8ca8" /><stop offset=".8" stop-color="#cfe4f4" /><stop offset="1" stop-color="#5d7c98" /></linearGradient>
    <linearGradient id="sun" x2="1" y2="1"><stop stop-color="#ffd83a" /><stop offset="1" stop-color="#d98200" /></linearGradient>
    <linearGradient id="grey" x2="1" y2="1"><stop stop-color="#d0d0d0" /><stop offset="1" stop-color="#777" /></linearGradient>
    <linearGradient id="bin"><stop stop-color="#555" /><stop offset=".5" stop-color="#111" /><stop offset="1" stop-color="#666" /></linearGradient>
    <linearGradient id="bands"><stop stop-color="#4a6074" /><stop offset=".25" stop-color="#7d96ab" /><stop offset=".26" stop-color="#d4e2ec" /><stop offset=".5" stop-color="#c4d6e4" /><stop offset=".51" stop-color="#8098ae" /><stop offset="1" stop-color="#33485a" /></linearGradient>
    <radialGradient id="ball"><stop stop-color="#eaf5ff" /><stop offset=".5" stop-color="#9ab4cb" /><stop offset="1" stop-color="#4a6178" /></radialGradient>
    <radialGradient id="glow"><stop stop-color="#fff" /><stop offset=".35" stop-color="#a9c8e2" /><stop offset="1" stop-color="#33506c" /></radialGradient>
    <radialGradient id="pearl" cx=".35" cy=".3"><stop stop-color="#fff" /><stop offset=".5" stop-color="#ddd" /><stop offset="1" stop-color="#888" /></radialGradient>
    <radialGradient id="greyball"><stop stop-color="#888" /><stop offset="1" stop-color="#3c3c3c" /></radialGradient>
    <radialGradient id="redball" cx=".4" cy=".35"><stop stop-color="#ff5050" /><stop offset="1" stop-color="#6a1616" /></radialGradient>
    <linearGradient id="zgold" x2="1" y2="1"><stop stop-color="#f8b53a" /><stop offset="1" stop-color="#d8860e" /></linearGradient>
  </defs>
</svg>

<div class="screen">
  <nav class="menubar">
    <svg class="apple" viewBox="0 0 28 34">
      <path d="M19 1q1 6-6 8 0-6 6-8zM14 11q6-4 11 1-6 5 1 12-4 9-8 8-4-2-8 0Q5 31 3 21 3 11 9 10z" fill={ink} />
    </svg>
    <a class="app" href="#app">formZ pro</a>
    {#each menus as m}<a href="#{m}">{m}</a>{/each}
    <div class="extras">
      {#each extras as [w, art]}<svg width={w} height="44">{@html art}</svg>{/each}
      <span class="charge">100%</span>
      <svg width="66" height="44">{@html battery}</svg>
      <svg width="62" height="44">{@html flag}</svg>
    </div>
    <div class="corner">
      <svg width="34" height="34" viewBox="0 0 34 34"><circle cx="14" cy="12" r="9" fill="none" stroke={ink} stroke-width="2.500" /><path d="M20 19l10 12" stroke={ink} stroke-width="3" /></svg>
      <svg width="38" height="24" viewBox="0 0 38 24"><path d="M0 3h4M8 3h30M0 12h4M8 12h24M0 21h4M8 21h30" stroke={ink} stroke-width="4" /></svg>
    </div>
  </nav>

  <div class="titlebar">
    <span class="lights"><i class="close"></i><i class="min"></i><i class="max"></i></span>
    <h1>Untitled1 - 1</h1>
  </div>

  <div class="window">
    <section class="top">
      <svg class="logo" viewBox="0 0 96 116">
        <path d="M62 8h28v54H62z" fill="#3d58a8" />
        <text transform="translate(85 56) rotate(-90)" font-family="Liberation Sans, sans-serif" font-size="23" fill="#c3cadb">pro</text>
        <path d="M10 10h68L36 82h20q14-2 18-16h5l-8 28H8L54 20H32Q18 22 16 34h-5z" fill="#555" />
        <path d="M7 6h68L30 80h26q12-2 16-14h4l-6 27H6L50 13H28Q14 15 12 29H7z" fill="url(#zgold)" stroke="#5c3a08" stroke-width="1.500" />
        <circle cx="15" cy="106" r="6" fill="#a9cbe8" stroke="#555" stroke-width="2" />
      </svg>
      <div class="prompt">
        <p><span>Pick:</span> <span>Selects Entities</span></p>
        <hr />
        <p>Click: Begin Area Pick</p>
        <p>Shift + click: Selects multiple entities</p>
      </div>
      <div class="bars">
        <div class="bar">{@render toolbar(row1)}</div>
        <div class="bar">{@render toolbar(row2)}</div>
      </div>
    </section>

    <section class="coords">
      <label for="cx">X</label><input id="cx" class="wide" bind:value={x} />
      <label for="cy">Y</label><input id="cy" bind:value={y} />
      <label for="cz">Z</label><input id="cz" bind:value={z} />
      <select class="space" bind:value={space} aria-label="Space">
        <option>3D</option>
        <option>2D</option>
      </select>
      <span class="rule"></span>
      <div class="tabs">
        <button class="tool on" aria-label="Previous"><svg viewBox="0 0 40 40"><path d="M26 7L13 20l13 13" fill="none" stroke="#111" stroke-width="2.500" /></svg></button>
        <button class="tool on" aria-label="Next"><svg viewBox="0 0 40 40"><path d="M13 7l13 13-13 13" fill="none" stroke="#111" stroke-width="2.500" /></svg></button>
        <button class="tab"><i class="dot"></i>Untitled1</button>
        <span class="rule"></span>
      </div>
    </section>

    <section class="palette-tools">
      {#each tools as [name, art], i}
        <button class:picked={i == 0} title={name} aria-label={name}>
          <svg viewBox="0 0 80 80">{@html art}</svg>
        </button>
      {/each}
    </section>

    <main>
      <svg viewBox="160 282 3080 1818">
        <path d={gridPath(false)} class="minor" />
        <path d={gridPath(true)} class="major" />
        <path d="M{project(0.5, 0)}L{project(0.5, 1)}" stroke="#2fd02f" stroke-width="2" />
        <path d="M{project(0, 0.5)}L{project(1, 0.5)}" stroke="#e02c2c" stroke-width="2" />
        <path d="M1697 472V1190" stroke="#2f2fe0" stroke-width="3" />
        <path d="M1697 1190V1738" stroke="#2f2fe0" stroke-width="3" stroke-dasharray="24 2" />
        {#each axisLabels as [t, lx, ly, c]}
          <text x={lx} y={ly} fill={c} text-anchor="middle">{t}</text>
        {/each}
      </svg>
    </main>

    <section class="bottom">
      {@render toolbar(gridTools)}
      <input class="long" bind:value={gridSize} aria-label="Grid module" />
      <input class="short" bind:value={gridDiv} aria-label="Subdivisions" />
      {@render toolbar([sep])}
      <div class="roomy">{@render toolbar(planeTools)}</div>
      <input class="long" bind:value={snapSize} disabled aria-label="Snap module" />
      <input class="short deg" bind:value={snapAngle} disabled aria-label="Snap angle" />
      {@render toolbar([sep])}
      {@render toolbar(angleTools)}
      <input class="short deg" bind:value={angle} disabled aria-label="Angle" />
      {@render toolbar([sep])}
      {@render toolbar(snaps)}
    </section>
  </div>

  <aside>
    <section class="palette">
      {@render head('Materials')}
      <div class="body">
        <div class="sheet">
          <div class="filter">
            <svg class="back" viewBox="0 0 24 24"><path d="M22 2v20L2 12z" fill="#aaa" stroke="#888" /></svg>
            <i class="swatch"></i>
            <select aria-label="Material group"><option>Home</option></select>
            <span class="modes">
              {@render mini('list', 'plain')}
              {@render mini('single', 'plain')}
              {@render mini('tiles', 'plain')}
            </span>
            <i class="bar-mark"></i>
            <span class="modes pair">
              {@render mini('plus', 'pale')}
              {@render mini('more', 'pale')}
            </span>
          </div>
          <div class="materials">
            {#each materials as c, i}
              <button class:picked={i == picked} on:click={() => (picked = i)} aria-label="Material {i + 1}">
                <svg viewBox="0 0 64 64">
                  <path d="M0 0h64v23H0z" fill="#7876ab" />
                  <path d="M0 23h64v41H0z" fill="#fff" />
                  <path d={checker} />
                  <path d="M7 14L46 22 44 61 11 48z" fill={c} />
                  <path d="M7 14L28 4l33 5-15 13zM46 22L61 9l-4 38-13 14z" fill={c} />
                  <path d="M7 14L28 4l33 5-15 13z" opacity=".3" />
                  <path d="M46 22L61 9l-4 38-13 14z" opacity=".7" />
                </svg>
              </button>
            {/each}
          </div>
        </div>
        <div class="scroll"><i></i></div>
      </div>
    </section>

    <section class="palette options">
      {@render head('Tool Options - Pick')}
      <p>Topological Level</p>
      <div class="levels">
        <button class="tool on" aria-label="Automatic">
          <svg viewBox="0 0 60 60">
            <path d="M26 5l8 2-4 15 12-12 6 7-15 10 5 14-8 4-7-14-8 14-8-4 8-14L6 20l5-7 12 9z" fill="#c2d0da" stroke="#1c2830" stroke-width="2" />
            <path d="M34 20l20 20-7 1 7 15-8 3-6-14-7 6z" fill="#9fb4c2" stroke="#1c2830" stroke-width="2" />
          </svg>
        </button>
        <span class="gap line"></span>
        {#each pickLevels as [name, art]}
          <button class="level" title={name} aria-label={name}><svg viewBox="0 0 56 58">{@html art}</svg></button>
        {/each}
      </div>
      <div class="checks">
        <label><input type="checkbox" bind:checked={allowDrag} />Allow Drag</label>
        <label><input type="checkbox" bind:checked={allowCopy} />Allow Copy</label>
        <button class="drop" aria-label="More options"><svg viewBox="0 0 18 16"><path d="M4 5h10l-5 6z" /></svg></button>
      </div>
      <button class="inspector">Inspector</button>
    </section>

    <section class="palette">
      {@render head('Objects')}
      <div class="body">
        <div class="sheet">
          <table>
            <thead>
              <tr>
                <th>{@render mini('check', 'deep')}</th>
                <th>{@render mini('eye')}</th>
                <th>{@render mini('lock')}</th>
                <th>{@render mini('snap')}</th>
                <th class="name">Name</th>
                <th class="acts">{@render mini('plus', 'pale')}{@render mini('more', 'pale')}</th>
              </tr>
            </thead>
            <tbody>
              {#each Array(6) as _}<tr><td colspan="6"></td></tr>{/each}
            </tbody>
          </table>
        </div>
        <div class="scroll"></div>
      </div>
    </section>

    <section class="palette">
      {@render head('Layers')}
      <div class="body">
        <div class="sheet">
          <table>
            <thead>
              <tr>
                <th>{@render mini('ball', 'deep')}</th>
                <th>{@render mini('eye')}</th>
                <th>{@render mini('lock')}</th>
                <th>{@render mini('snap')}</th>
                <th class="name">Name</th>
                <th class="acts">{@render mini('plus', 'pale')}{@render mini('more', 'pale')}</th>
              </tr>
            </thead>
            <tbody>
              <tr>
                <td>{@render mini('active', 'plain')}</td>
                <td>{@render mini('eye', 'plain')}</td>
                <td></td>
                <td>{@render mini('snap', 'plain')}</td>
                <td class="layer" colspan="2">Layer 1</td>
              </tr>
              {#each Array(5) as _}<tr><td colspan="6"></td></tr>{/each}
            </tbody>
          </table>
        </div>
        <div class="scroll"></div>
      </div>
    </section>

    <section class="palette">
      {@render head('Lights')}
      <div class="body">
        <div class="sheet">
          <table>
            <thead>
              <tr>
                <th>{@render mini('check', 'deep')}</th>
                <th>{@render mini('eye')}</th>
                <th>{@render mini('lock')}</th>
                <th>{@render mini('light', 'deep')}</th>
                <th>{@render mini('shadow', 'deep')}</th>
                <th class="name">Name</th>
                <th class="acts">{@render mini('plus', 'pale')}{@render mini('more', 'pale')}</th>
              </tr>
            </thead>
            <tbody>
              {#each lights as l}
                <tr>
                  <td></td>
                  <td></td>
                  <td></td>
                  <td>{@render mini('light', 'plain')}</td>
                  <td>{#if l.shadow}{@render mini('shadow', 'plain')}{/if}</td>
                  <td class="light"><div>{@render mini(l.icon, 'plain')}{l.name}</div></td>
                  <td class="level-cell"><input type="range" value={l.level} aria-label="{l.name} intensity" /></td>
                </tr>
              {/each}
              {#each Array(4) as _}<tr><td colspan="7"></td></tr>{/each}
            </tbody>
          </table>
        </div>
        <div class="scroll"></div>
      </div>
    </section>

    <section class="palette views">
      {@render head('Views')}
      <div class="kinds">
        {#each viewKinds as [name, art], i}
          <button class="kind" class:tool={i == 0} class:on={i == 0} title={name} aria-label={name}>
            <svg viewBox="0 0 48 50">{@html art}</svg>
          </button>
        {/each}
      </div>
      <div class="body">
        <div class="sheet">
          <table>
            <thead>
              <tr>
                <th>{@render mini('ball', 'deep')}</th>
                <th>{@render mini('check', 'deep')}</th>
                <th>{@render mini('eye')}</th>
                <th>{@render mini('lock')}</th>
                <th class="name">Name</th>
                <th class="acts more">
                  {@render mini('left', 'plain')}{@render mini('right', 'plain')}<i class="bar-mark"></i>{@render mini('plus', 'pale')}{@render mini('more', 'pale')}
                </th>
              </tr>
            </thead>
            <tbody>
              {#each Array(3) as _}<tr><td colspan="6"></td></tr>{/each}
            </tbody>
          </table>
        </div>
        <div class="scroll"></div>
      </div>
      <div class="mark"><b>UEBUG</b><span>.com</span></div>
    </section>
  </aside>
</div>

<style>
  :global(body) {
    margin: 0;
    background: #e6e6e6;
  }
  .screen {
    height: 100vh;
    display: grid;
    grid-template: 46px 45px minmax(0, 1fr) / minmax(0, 1fr) 600px;
    font: 20px/22px 'Liberation Sans', Arial, sans-serif;
    color: #000;
    background: #e6e6e6;
    overflow: hidden;
  }
  .screen * {
    box-sizing: border-box;
  }
  .defs {
    position: absolute;
    width: 0;
    height: 0;
  }
  button,
  input,
  select {
    font: inherit;
    color: inherit;
    margin: 0;
    padding: 0;
    border: 0;
    border-radius: 0;
  }
  button {
    background: none;
    flex: none;
  }
  button svg {
    display: block;
    width: 100%;
    height: 100%;
  }
  p,
  h1,
  h2 {
    margin: 0;
    font-weight: normal;
  }

  /* menu bar */
  .menubar {
    grid-column: 1 / 3;
    display: flex;
    align-items: center;
    gap: 37px;
    padding: 0 44px 0 42px;
    border-bottom: 2px solid #6b7f92;
    background: linear-gradient(90deg, #deebf6, #e9eff7);
    font: 27px/36px Inter, sans-serif;
    color: #26303a;
  }
  .menubar a {
    color: inherit;
    text-decoration: none;
    white-space: nowrap;
  }
  .menubar .app {
    font-size: 28px;
    font-weight: 700;
  }
  .apple {
    width: 28px;
    height: 34px;
  }
  .extras {
    display: flex;
    align-items: center;
    margin-left: auto;
  }
  .charge {
    width: 75px;
    padding-left: 10px;
    font-size: 24px;
  }
  .corner {
    display: flex;
    align-items: center;
    gap: 28px;
    margin-left: 514px;
  }

  /* title bar */
  .titlebar {
    grid-column: 1 / 3;
    display: grid;
    grid-template-columns: 1fr auto 1fr;
    align-items: center;
    padding: 0 16px;
    border-top: 2px solid #f4f4f4;
    border-bottom: 2px solid #999;
    border-radius: 10px 10px 0 0;
    background: linear-gradient(#e6e6e6, #cbcbcb);
  }
  h1 {
    font-size: 26px;
    line-height: 30px;
    color: #333;
  }
  .lights {
    display: flex;
    gap: 16px;
  }
  .lights i {
    width: 24px;
    height: 24px;
    border: 1px solid #d8403a;
    border-radius: 50%;
    background: #fc5650;
  }
  .lights .min {
    border-color: #dc9a20;
    background: #fdb62a;
  }
  .lights .max {
    border-color: #1a9a2c;
    background: #28c63e;
  }

  /* main window */
  .window {
    display: grid;
    grid-template: 128px 63px minmax(0, 1fr) 60px / 160px minmax(0, 1fr);
  }
  .top {
    grid-column: 1 / 3;
    display: flex;
    border-bottom: 2px solid #8c8c8c;
    border-right: 2px solid #999;
  }
  .logo {
    flex: none;
    width: 96px;
    height: 116px;
  }
  .prompt {
    width: 706px;
    padding: 5px 2px 0 12px;
  }
  .prompt p:first-child {
    display: flex;
    gap: 16px;
  }
  hr {
    height: 4px;
    margin: 2px 0 4px 4px;
    border: 0;
    border-top: 2px solid #959595;
    background: #fff;
  }
  .bars {
    display: grid;
    align-content: start;
    gap: 8px;
  }
  .bar,
  .levels {
    display: flex;
  }
  .tool {
    width: 52px;
    height: 52px;
    border: 3px solid transparent;
  }
  .tool svg {
    width: 52px;
    height: 52px;
    margin: -3px;
  }
  .tool:disabled svg {
    opacity: 0.42;
  }
  .tool.on {
    border-color: #606060 #fff #fff #606060;
    border-radius: 12px;
    background: #c6cad8;
  }
  .gap {
    flex: none;
    width: 14px;
  }
  .gap.space {
    width: 6px;
  }
  .gap.line {
    width: 8px;
    height: 46px;
    margin-right: 6px;
    border-right: 2px solid #c9c9c9;
    align-self: center;
  }

  /* coordinates */
  .coords {
    grid-column: 2;
    display: flex;
    align-items: center;
    padding-left: 5px;
    border-bottom: 1px solid #8a8a8a;
    background: #d0d0d0;
  }
  .coords label {
    width: 20px;
  }
  .coords input,
  .bottom input {
    width: 130px;
    height: 30px;
    margin-right: 12px;
    padding-left: 22px;
    border: 1px solid #a9a9a9;
    background: #fff;
    color: #222;
  }
  .coords .wide {
    padding-left: 8px;
  }
  .space {
    appearance: none;
  }
  .coords .space {
    width: 162px;
    height: 33px;
    padding: 0 14px;
    border-radius: 6px;
    color: #222;
    background: url("data:image/svg+xml,%3Csvg xmlns='http://www.w3.org/2000/svg' width='30' height='33'%3E%3Cpath d='M0 0h30v33H0z' fill='%23237fff'/%3E%3Cpath d='M10 13l5-6 5 6M10 20l5 6 5-6' fill='none' stroke='%23fff' stroke-width='3'/%3E%3C/svg%3E")
      right no-repeat #fff;
  }
  .rule {
    width: 2px;
    height: 40px;
    margin-left: 36px;
    background: #b4b4b4;
  }
  .tabs {
    display: flex;
    align-items: center;
    margin-left: 710px;
  }
  .tabs .tool,
  .tabs .tool svg {
    width: 40px;
    height: 40px;
  }
  .tab {
    display: flex;
    align-items: center;
    gap: 9px;
    width: 148px;
    height: 38px;
    margin-left: 24px;
    padding-left: 6px;
    background: #1469f6;
    color: #fff;
    font-size: 24px;
  }
  .tabs .rule {
    margin-left: 8px;
  }
  .dot {
    flex: none;
    width: 20px;
    height: 20px;
    border-radius: 50%;
    background: #f4544c;
  }

  /* tool palette */
  .palette-tools {
    grid-row: 2 / 5;
    grid-column: 1;
    display: grid;
    grid-template-columns: 80px 80px;
    grid-auto-rows: 80px;
    padding-top: 1px;
  }
  .palette-tools .picked {
    border-radius: 14px;
    background: #c6cad8;
    box-shadow: inset 0 0 0 1px #e6e6e6, inset 0 0 0 4px #f00;
  }

  main {
    grid-column: 2;
    background: #5f665e;
    overflow: hidden;
  }
  main svg {
    display: block;
    width: 100%;
    height: 100%;
    font: 20px 'DejaVu Sans', sans-serif;
    fill: none;
  }
  .minor {
    stroke: #878b85;
  }
  .major {
    stroke: #a6aaa3;
    stroke-width: 1.5;
  }

  .bottom {
    grid-column: 2;
    display: flex;
    align-items: center;
    padding: 0 0 4px 1px;
    border: 1px solid #8a8a8a;
    border-left: 0;
    border-right-width: 2px;
  }
  .bottom input {
    margin-right: 2px;
    padding-left: 20px;
  }
  .bottom .short {
    width: 73px;
    margin: 0 0 0 1px;
    padding-left: 8px;
  }
  .bottom .deg {
    padding-left: 20px;
  }
  .bottom input:disabled {
    border-color: #ccc;
    color: #b4b4b4;
  }
  .roomy {
    display: flex;
    gap: 2px;
    padding-right: 2px;
  }

  /* palettes on the right */
  aside {
    display: flex;
    flex-direction: column;
    padding-top: 3px;
    min-height: 0;
  }
  .palette {
    display: flex;
    flex-direction: column;
    flex: none;
    height: 306px;
    padding-bottom: 8px;
  }
  .palette-head {
    display: flex;
    align-items: center;
    height: 36px;
    margin: 0 2px 2px;
    padding: 0 5px 0 8px;
    background: #c3c3c3;
    outline: 1px solid #eee;
  }
  h2 {
    flex: 1;
    padding: 0 0 2px 12px;
    font-size: 22px;
    line-height: 24px;
  }
  .pop,
  .fold {
    width: 20px;
    height: 20px;
    margin-left: 15px;
  }
  .body {
    flex: 1;
    min-height: 0;
    display: flex;
    justify-content: space-between;
  }
  .sheet {
    width: 566px;
    background: #fff;
    overflow: hidden;
  }
  .scroll {
    width: 28px;
    margin-bottom: 30px;
    padding: 6px;
    background: #f8f8f8;
  }
  .scroll i {
    display: block;
    width: 16px;
    height: 40px;
    border-radius: 8px;
    background: #c1c1c1;
  }
  .mini {
    width: 32px;
    height: 32px;
    background: #c6c6c6;
    border-radius: 3px;
  }
  .mini.deep {
    background: #a9a9a9;
  }
  .mini.pale {
    background: #e4e4e4;
  }
  .mini.plain {
    background: none;
  }
  .bar-mark {
    width: 2px;
    height: 32px;
    background: #000;
  }

  .filter {
    display: flex;
    align-items: center;
    height: 42px;
    padding: 0 6px 0 4px;
    border-bottom: 2px solid #9b9b9b;
  }
  .back {
    width: 24px;
    height: 24px;
    margin-right: 12px;
  }
  .swatch {
    width: 28px;
    height: 28px;
    margin-right: 4px;
    border: 4px solid #f0141e;
  }
  .filter select {
    appearance: none;
    width: 234px;
    height: 32px;
    border: 2px solid #000;
    background: url("data:image/svg+xml,%3Csvg xmlns='http://www.w3.org/2000/svg' width='34' height='28'%3E%3Cpath d='M0 0v28' stroke='%23000' stroke-width='4'/%3E%3Cpath d='M11 7h15l-7 15z'/%3E%3C/svg%3E")
      right no-repeat #fff;
  }
  .modes {
    display: flex;
    gap: 12px;
    margin-left: auto;
  }
  .modes.pair {
    margin-left: 6px;
  }
  .filter .bar-mark {
    margin-left: 4px;
  }
  .materials {
    display: grid;
    grid-template-columns: repeat(8, 64px);
    gap: 6px;
    padding: 6px;
  }
  .materials button {
    height: 64px;
  }
  .materials .picked {
    outline: 4px solid #f00;
  }

  .options {
    flex: 1;
    align-items: flex-start;
  }
  .options .palette-head {
    align-self: stretch;
  }
  .options p {
    padding: 1px 5px 0;
  }
  .levels .tool {
    width: 66px;
    height: 66px;
    margin-left: 1px;
  }
  .levels .tool svg {
    width: 60px;
    height: 60px;
    margin: 0;
  }
  .level {
    width: 56px;
    height: 58px;
    margin: 4px 6px 0;
  }
  .checks {
    display: flex;
    align-items: center;
    height: 32px;
    padding: 2px 0 0 6px;
  }
  .checks label {
    display: flex;
    align-items: center;
    gap: 11px;
    width: 148px;
    color: #222;
  }
  .checks input {
    appearance: none;
    width: 24px;
    height: 24px;
    border-radius: 5px;
    background: #e0e0e0;
  }
  .checks input:checked {
    background: url("data:image/svg+xml,%3Csvg xmlns='http://www.w3.org/2000/svg' width='24' height='24'%3E%3Cpath d='M6 12l5 6 8-13' fill='none' stroke='%23fff' stroke-width='3'/%3E%3C/svg%3E")
      #3490fc;
  }
  .drop {
    width: 22px;
    height: 20px;
    margin-left: 66px;
    border: 2px solid #111;
    border-radius: 3px;
  }
  .inspector {
    width: 114px;
    height: 24px;
    margin: 13px 23px;
    border: 1px solid #c4c4c4;
    border-radius: 5px;
    background: #fff;
  }

  /* lists */
  table {
    width: 566px;
    table-layout: fixed;
    border-collapse: collapse;
  }
  th,
  td {
    width: 40px;
    height: 40px;
    padding: 0 0 0 4px;
    font-weight: normal;
    text-align: left;
    vertical-align: middle;
  }
  thead tr {
    border-bottom: 2px solid #9aa0a6;
  }
  th .mini,
  td .mini {
    display: block;
  }
  tbody tr:nth-child(odd) {
    background: #e6f0fa;
  }
  th.name {
    width: auto;
    padding-left: 12px;
  }
  th.acts {
    width: 134px;
    font-size: 0;
  }
  th.more {
    width: 200px;
  }
  .acts .mini {
    display: inline-block;
    vertical-align: middle;
    margin-left: 12px;
  }
  .acts .mini:first-child {
    margin-left: 48px;
  }
  .more .mini:first-child {
    margin-left: 26px;
  }
  .acts .bar-mark {
    display: inline-block;
    vertical-align: middle;
    margin-left: 4px;
  }
  .acts .bar-mark + .mini {
    margin-left: 6px;
  }
  td.layer {
    width: auto;
    padding: 3px 0 0 38px;
    vertical-align: top;
  }
  td.light {
    width: auto;
    padding: 3px 0 0;
    vertical-align: top;
  }
  td.light div {
    display: flex;
    gap: 14px;
    height: 34px;
  }
  td.level-cell {
    padding: 0;
    vertical-align: top;
  }
  input[type='range'] {
    appearance: none;
    display: block;
    width: 128px;
    height: 16px;
    margin: 14px 0 0 7px;
    background: linear-gradient(#000, #000) center top / 112px 2px no-repeat;
  }
  input[type='range']::-webkit-slider-thumb {
    appearance: none;
    width: 16px;
    height: 16px;
    background: url("data:image/svg+xml,%3Csvg xmlns='http://www.w3.org/2000/svg' width='16' height='16'%3E%3Cpath d='M8 2l6 11H2z' fill='%23fff' stroke='%23000' stroke-width='2'/%3E%3C/svg%3E");
  }

  .views {
    position: relative;
    height: 242px;
    padding: 0;
  }
  .kinds {
    display: flex;
    height: 50px;
  }
  .kind {
    width: 48px;
    height: 50px;
  }
  .kinds .tool {
    width: 47px;
    height: 48px;
    margin-right: 1px;
  }
  .kinds .tool svg {
    width: 47px;
    height: 48px;
  }
  .views .scroll {
    margin: 0;
  }
  .mark {
    position: absolute;
    right: 0;
    bottom: 6px;
    color: #fff;
    opacity: 0.75;
  }
  .mark b {
    font-size: 34px;
  }
</style>
